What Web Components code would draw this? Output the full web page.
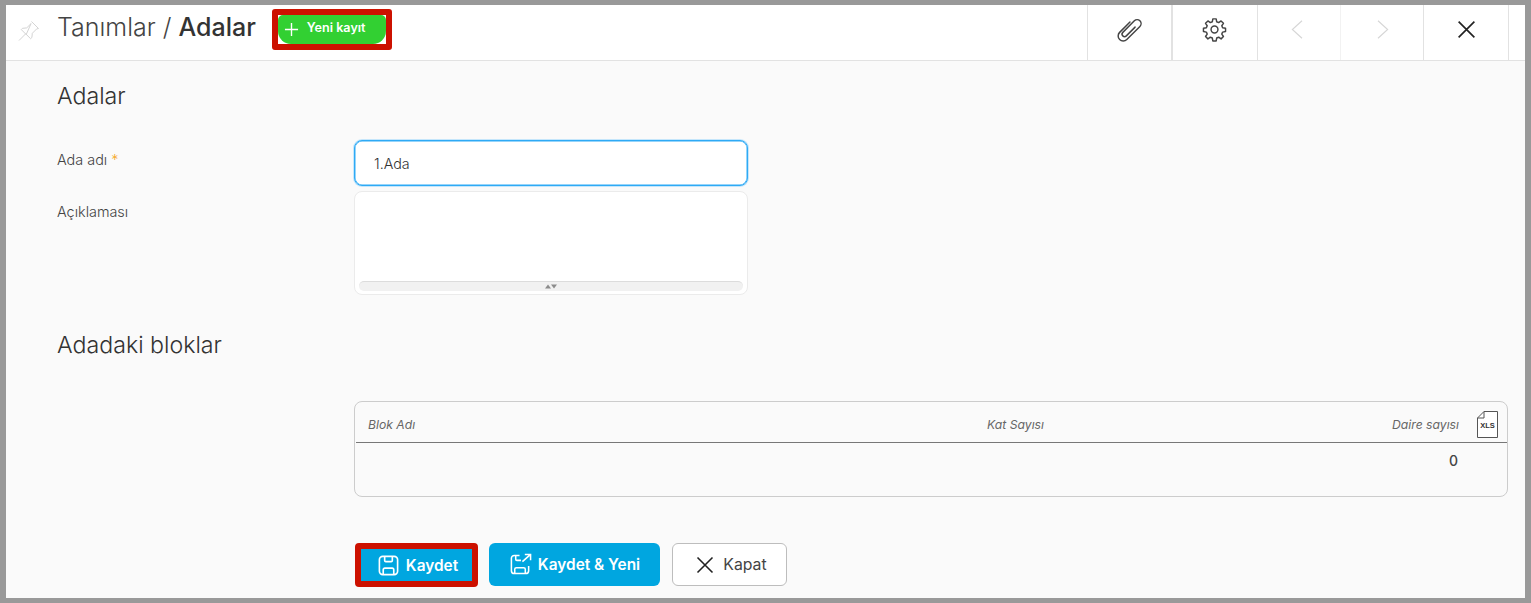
<!DOCTYPE html>
<html lang="tr">
<head>
<meta charset="utf-8">
<title>Adalar</title>
<style>
  html, body { margin: 0; height: 100%; }
  body { font-family: Inter, "Liberation Sans", sans-serif; overflow: hidden; }
</style>
</head>
<body>
<app-frame>
  <page-header slot="header" crumb="Tanımlar" title="Adalar"></page-header>

  <section-title>Adalar</section-title>
  <form-row label="Ada adı" required>
    <text-box value="1.Ada"></text-box>
  </form-row>
  <form-row label="Açıklaması" gap="5" pad="13">
    <note-box></note-box>
  </form-row>

  <section-title style="margin-top:15px">Adadaki bloklar</section-title>
  <blocks-table></blocks-table>

  <action-bar></action-bar>
</app-frame>

<script>
const ICONS = {
  pin: '<path d="M14.500 2.500l7 7-1.800.4-4.400 4.400-.4 4.200-1.300 1.200-4.900-4.900-6.700 6.700M9.200 15.500L4.300 10.600l1.200-1.300 4.200-.4 4.400-4.400z" fill="none" stroke="currentColor" stroke-width="1" stroke-linejoin="round"/>',
  clip: '<path transform="rotate(45 12 12)" d="M14 7v11a2.200 2.200 0 0 1-4.400 0V3.500a3.500 3.500 0 0 1 7 0V20a4.500 4.500 0 0 1-9 0V7" fill="none" stroke="currentColor" stroke-width="1.300" stroke-linecap="round"/>',
  gear: '<circle cx="12" cy="12" r="3.300" fill="none" stroke="currentColor" stroke-width="1.400"/><path d="M10.400 1.800h3.200l.5 2.800 1.900.8 2.300-1.600 2.300 2.300-1.600 2.300.8 1.900 2.800.5v3.200l-2.800.5-.8 1.900 1.600 2.300-2.300 2.300-2.300-1.600-1.900.8-.5 2.800h-3.200l-.5-2.800-1.900-.8-2.300 1.600-2.300-2.300 1.600-2.300-.8-1.900-2.800-.5v-3.200l2.800-.5.8-1.900L3.400 6.100l2.300-2.300L8 5.400l1.900-.8z" fill="none" stroke="currentColor" stroke-width="1.400" stroke-linejoin="round"/>',
  left: '<path d="M16 2L5 12l11 10" fill="none" stroke="currentColor" stroke-width="1.300"/>',
  right: '<path d="M8 2l11 10L8 22" fill="none" stroke="currentColor" stroke-width="1.300"/>',
  close: '<path d="M3 3l18 18M21 3L3 21" fill="none" stroke="currentColor" stroke-width="1.900"/>',
  plus: '<path d="M12 1.500v21M1.500 12h21" fill="none" stroke="currentColor" stroke-width="2.200"/>',
  save: '<path d="M6 2.500h12a3.500 3.500 0 0 1 3.500 3.500v12a3.500 3.500 0 0 1-3.500 3.500H6A3.500 3.500 0 0 1 2.500 18V6A3.500 3.500 0 0 1 6 2.500zM8 2.500v4.200c0 .7.5 1.200 1.200 1.200h5.600c.7 0 1.200-.5 1.200-1.200V2.500M6.500 21.500v-5c0-1 .7-1.800 1.700-1.800h7.600c1 0 1.700.8 1.700 1.800v5" fill="none" stroke="currentColor" stroke-width="1.700"/>',
  saveNew: '<path d="M11 2.500H5.500A3 3 0 0 0 2.500 5.500v13a3 3 0 0 0 3 3h12a3 3 0 0 0 3-3v-5M7 2.500v4c0 .7.5 1.200 1.200 1.200h4.300M6 21.500v-4.500c0-1 .7-1.700 1.700-1.700h7.600c1 0 1.700.7 1.700 1.700v4.500M14 9l8.500-7.500M16.500 1.500h6v6" fill="none" stroke="currentColor" stroke-width="1.600"/>'
};

function icon(name, size) {
  return `<svg width="${size}" height="${size}" viewBox="0 0 24 24" aria-hidden="true">${ICONS[name]}</svg>`;
}

class AppFrame extends HTMLElement {
  constructor() {
    super();
    this.attachShadow({ mode: 'open' });
    this.shadowRoot.innerHTML = `
      <style>
        :host {
          display: flex;
          flex-direction: column;
          box-sizing: border-box;
          height: 603px;
          border: solid #999;
          border-width: 5px 6px 5px 6px;
          background: #fafafa;
          overflow: hidden;
        }
        main { flex: 1; padding: 0 17px 0 51px; }
      </style>
      <slot name="header"></slot>
      <main><slot></slot></main>
    `;
  }
}

class PageHeader extends HTMLElement {
  constructor() {
    super();
    this.attachShadow({ mode: 'open' });
  }
  connectedCallback() {
    const crumb = this.getAttribute('crumb') || '';
    const title = this.getAttribute('title') || '';
    this.removeAttribute('title');
    const tools = [
      ['clip', 27, '#444'], ['gear', 25, '#444'], ['left', 21, '#d6d6d6'],
      ['right', 21, '#d6d6d6'], ['close', 21, '#222']
    ];
    this.shadowRoot.innerHTML = `
      <style>
        :host {
          display: flex;
          align-items: stretch;
          height: 56px;
          box-sizing: border-box;
          background: #fff;
          border-bottom: 1px solid #e2e2e2;
          padding-right: 16px;
        }
        .pin { color: #d4d4d4; display: flex; align-items: center; margin: 0 16px 0 11px; padding-bottom: 3px; }
        h1 {
          margin: 0;
          padding-bottom: 11px;
          align-self: center;
          font: 300 25px/1 Inter, "Liberation Sans", sans-serif;
          color: #444;
          white-space: nowrap;
        }
        h1 b { font-weight: 500; color: #333; }
        .new {
          align-self: flex-start;
          margin: 4px 0 0 16px;
          padding: 0;
          box-sizing: border-box;
          width: 120px;
          height: 41px;
          border: 6px solid #cc1100;
          border-radius: 3px;
          background: #fff;
          font: 600 12.600px Inter, "Liberation Sans", sans-serif;
        }
        .new > span {
          display: flex;
          align-items: center;
          height: 100%;
          gap: 8px;
          padding-left: 6px;
          box-sizing: border-box;
          background: #32d032;
          color: #fff;
          border-radius: 5px 5px 13px 13px;
        }
        .new em { font-style: normal; padding-bottom: 4px; }
        .tools {
          margin-left: auto;
          display: grid;
          grid-template-columns: 85px 85px 83px 83px 85px;
          border-left: 1px solid #e2e2e2;
        }
        .tools div {
          display: flex;
          align-items: center;
          justify-content: center;
          box-sizing: border-box;
          padding: 0 2px 6px 0;
          border-right: 1px solid #e2e2e2;
        }
        .tools div:first-child { border-right-width: 2px; padding-right: 0; }
        .tools div:nth-child(3) { border-right-color: #f2f2f2; }
        .tools div:last-child { padding-right: 0; }
        svg { display: block; overflow: visible; }
      </style>
      <span class="pin">${icon('pin', 24)}</span>
      <h1>${crumb} / <b>${title}</b></h1>
      <div class="new"><span>${icon('plus', 15)}<em>Yeni kayıt</em></span></div>
      <div class="tools">
        ${tools.map(t => `<div style="color:${t[2]}">${icon(t[0], t[1])}</div>`).join('')}
      </div>
    `;
  }
}

class SectionTitle extends HTMLElement {
  constructor() {
    super();
    this.attachShadow({ mode: 'open' });
    this.shadowRoot.innerHTML = `
      <style>
        :host {
          display: block;
          font: 300 23.200px/28px Inter, "Liberation Sans", sans-serif;
          color: #333;
          padding-top: 21px;
          margin-bottom: 30px;
        }
      </style>
      <slot></slot>
    `;
  }
}

class FormRow extends HTMLElement {
  constructor() {
    super();
    this.attachShadow({ mode: 'open' });
  }
  connectedCallback() {
    const label = this.getAttribute('label') || '';
    const star = this.hasAttribute('required') ? ' <i>*</i>' : '';
    const gap = this.getAttribute('gap') || '0';
    const pad = this.getAttribute('pad') || '12';
    this.shadowRoot.innerHTML = `
      <style>
        :host { display: grid; grid-template-columns: 297px 394px; margin-top: ${gap}px; }
        label {
          font: 300 14.400px/16px Inter, "Liberation Sans", sans-serif;
          color: #444;
          padding-top: ${pad}px;
        }
        i { color: #f5a623; font-style: normal; }
      </style>
      <label>${label}${star}</label>
      <div><slot></slot></div>
    `;
  }
}

class TextBox extends HTMLElement {
  constructor() {
    super();
    this.attachShadow({ mode: 'open' });
  }
  connectedCallback() {
    this.shadowRoot.innerHTML = `
      <style>
        :host {
          display: flex;
          align-items: center;
          box-sizing: border-box;
          height: 46px;
          padding-left: 19px;
          background: #fff;
          border: 1px solid #2eaaf5;
          border-radius: 8px;
          box-shadow: 0 0 0 1px #c5e6fb, inset 0 0 0 .5px #2eaaf5;
          font: 300 14.300px Inter, "Liberation Sans", sans-serif;
          color: #333;
        }
      </style>
      ${this.getAttribute('value') || ''}
    `;
  }
}

class NoteBox extends HTMLElement {
  constructor() {
    super();
    this.attachShadow({ mode: 'open' });
    this.shadowRoot.innerHTML = `
      <style>
        :host {
          display: flex;
          align-items: flex-end;
          box-sizing: border-box;
          height: 104px;
          padding: 0 4px 3px;
          background: #fff;
          border: 1px solid #ebebeb;
          border-radius: 8px;
        }
        .handle {
          flex: 1;
          height: 10px;
          box-sizing: border-box;
          border-top: 1px solid #dcdcdc;
          border-radius: 5px;
          background: #f1f1f1;
          display: flex;
          justify-content: center;
          align-items: center;
        }
      </style>
      <div class="handle">
        <svg width="12" height="5" viewBox="0 0 12 5"><path d="M0 4.500L3 .5l3 4zM6 .5h6L9 4.500z" fill="#8c8c8c"/></svg>
      </div>
    `;
  }
}

class BlocksTable extends HTMLElement {
  constructor() {
    super();
    this.attachShadow({ mode: 'open' });
    this.shadowRoot.innerHTML = `
      <style>
        :host {
          display: block;
          box-sizing: border-box;
          height: 96px;
          margin: 42px 0 0 297px;
          border: 1px solid #ccc;
          border-radius: 8px;
          font-family: Inter, "Liberation Sans", sans-serif;
        }
        .row { display: grid; grid-template-columns: 1fr 320px 415px 48px; align-items: center; }
        .head {
          box-sizing: border-box;
          height: 41px;
          padding-top: 4px;
          margin-left: 1px;
          border-bottom: 1px solid #777;
          font: italic 400 12.200px "Inter", "Liberation Sans", sans-serif;
          color: #666;
        }
        .head > span:first-child { padding-left: 12px; }
        .num { text-align: right; }
        .xls { display: flex; justify-content: flex-end; padding-right: 9px; }
        .xls-wrap { position: relative; width: 21px; height: 27px; }
        .xls-wrap svg { position: absolute; inset: 0; }
        .xls-wrap b {
          position: absolute; left: 0; right: 0; top: 10px;
          text-align: center;
          font: 700 7.500px "Liberation Sans", sans-serif;
          color: #333;
        }
        .body { height: 34px; font-size: 14px; font-weight: 500; color: #444; }
        .body .num { padding-right: 1px; }
      </style>
      <div class="row head">
        <span>Blok Adı</span>
        <span class="num">Kat Sayısı</span>
        <span class="num">Daire sayısı</span>
        <span class="xls"><span class="xls-wrap">
          <svg width="21" height="27" viewBox="0 0 21 27"><path d="M7 .5h13.500v26H.5V7z M7 .5V7H.5" fill="#fff" stroke="#555"/></svg>
          <b>XLS</b>
        </span></span>
      </div>
      <div class="row body">
        <span></span><span></span>
        <span class="num">0</span><span></span>
      </div>
    `;
  }
}

class ActionBar extends HTMLElement {
  constructor() {
    super();
    this.attachShadow({ mode: 'open' });
    this.shadowRoot.innerHTML = `
      <style>
        :host {
          display: flex;
          align-items: flex-start;
          margin: 46px 0 0 298px;
          font: 600 15.400px Inter, "Liberation Sans", sans-serif;
        }
        .btn {
          display: flex;
          align-items: center;
          justify-content: center;
          box-sizing: border-box;
          height: 43px;
          gap: 6px;
          border-radius: 6px;
          background: #00a6e0;
          color: #fff;
        }
        .mark {
          border: 6px solid #cc1100;
          border-radius: 4px;
          width: 123px;
          height: 44px;
          background-clip: padding-box;
          margin-right: 11px;
          gap: 6px;
          padding-left: 2px;
        }
        .wide { width: 171px; margin-right: 12px; }
        .plain {
          width: 115px;
          padding-left: 3px;
          background: #fff;
          color: #444;
          border: 1px solid #bdbdbd;
          font: 400 15.800px Inter, "Liberation Sans", sans-serif;
          gap: 8px;
        }
        .plain svg { color: #222; }
      </style>
      <div class="btn mark">${icon('save', 23)}Kaydet</div>
      <div class="btn wide">${icon('saveNew', 23)}Kaydet &amp; Yeni</div>
      <div class="btn plain">${icon('close', 20)}Kapat</div>
    `;
  }
}

customElements.define('app-frame', AppFrame);
customElements.define('page-header', PageHeader);
customElements.define('section-title', SectionTitle);
customElements.define('form-row', FormRow);
customElements.define('text-box', TextBox);
customElements.define('note-box', NoteBox);
customElements.define('blocks-table', BlocksTable);
customElements.define('action-bar', ActionBar);
</script>
</body>
</html>
